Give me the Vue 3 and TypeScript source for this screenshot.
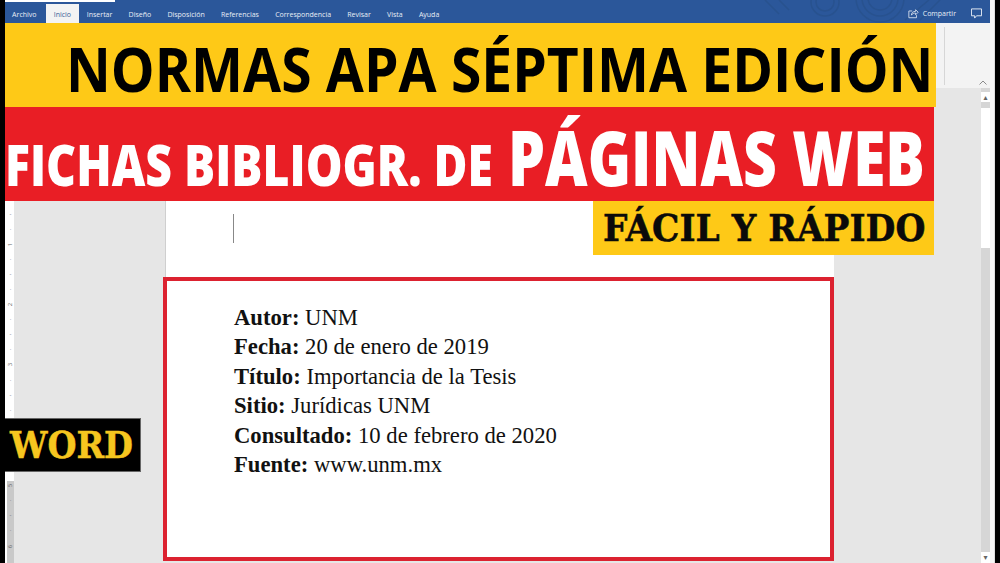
<script setup lang="ts">
const tabs = ['Archivo', 'Inicio', 'Insertar', 'Diseño', 'Disposición', 'Referencias', 'Correspondencia', 'Revisar', 'Vista', 'Ayuda']
const rows = [
  ['Autor:', 'UNM'],
  ['Fecha:', '20 de enero de 2019'],
  ['Título:', 'Importancia de la Tesis'],
  ['Sitio:', 'Jurídicas UNM'],
  ['Consultado:', '10 de febrero de 2020'],
  ['Fuente:', 'www.unm.mx'],
]
const ticks = ['-', '·', '1', '·', '-', '·', '2', '·', '-', '·', '3', '·', '-', '·', '4', '·', '-', '·', '5', '·', '-', '·', '6']
</script>

<template>
  <div class="frame">
    <div class="window">
      <header class="tabbar">
        <div class="quickbar"></div>
        <svg class="pattern" width="200" height="23" viewBox="0 0 200 23" fill="none" stroke="#28528f" stroke-width="1.500">
          <circle cx="70" cy="2" r="9" />
          <circle cx="70" cy="2" r="14" />
          <circle cx="125" cy="-2" r="12" />
          <circle cx="125" cy="-2" r="18" />
          <circle cx="125" cy="-2" r="24" />
          <path d="M10 0l14 14M24 0l10 10M150 20l24-20M165 20l20-20" />
        </svg>
        <nav class="tabs">
          <span v-for="t in tabs" :key="t" class="tab" :class="{ active: t === 'Inicio' }">{{ t }}</span>
        </nav>
        <div class="share">
          <svg width="11" height="11" viewBox="0 0 13 12" fill="none" stroke="#dfe7f3" stroke-width="1">
            <path d="M5 3H1v8h9V8" />
            <path d="M4 8c0-3 2-4.500 5-4.500V1.500L12 4.500 9 7.500V5.500C7 5.500 5 6 4 8z" />
          </svg>
          <span>Compartir</span>
          <svg class="comment" width="11" height="11" viewBox="0 0 12 12" fill="none" stroke="#eef2f8" stroke-width="1">
            <path d="M.5 1h11v7.500H6L4 11V8.500H.5z" />
          </svg>
        </div>
      </header>
      <div class="ribbon">
        <div class="sep"></div>
        <svg class="collapse" width="8" height="5" viewBox="0 0 8 5" fill="none" stroke="#8a8a8a" stroke-width="1">
          <path d="M.5 4.500L4 1l3.500 3.500" />
        </svg>
      </div>
      <div class="workspace">
        <div class="ruler">
          <span v-for="(t, i) in ticks" :key="i" class="tick" :class="{ num: t !== '-' && t !== '·' }">{{ t }}</span>
        </div>
        <main class="canvas">
          <section class="page">
            <div class="caret"></div>
          </section>
          <section class="card">
            <p v-for="r in rows" :key="r[0]"><b>{{ r[0] }}</b> {{ r[1] }}</p>
          </section>
        </main>
        <aside class="scroll">
          <i class="arrow up">▴</i>
          <div class="thumb"></div>
          <div class="track"></div>
          <i class="arrow">▾</i>
        </aside>
      </div>
    </div>
    <div class="banner yellow"><span class="squeeze">NORMAS APA SÉPTIMA EDICIÓN</span></div>
    <div class="banner red"><span class="small">FICHAS BIBLIOGR. DE</span><span class="big">PÁGINAS WEB</span></div>
    <div class="banner quick"><span class="squeeze">FÁCIL Y RÁPIDO</span></div>
    <div class="banner word"><span class="squeeze">WORD</span></div>
  </div>
</template>

<style>
html, body { margin: 0; background: #000; }
</style>

<style scoped>
.frame { position: relative; width: 1000px; height: 563px; overflow: hidden; background: #000; padding: 0 5px; box-sizing: border-box; }
.window { width: 990px; height: 563px; display: flex; flex-direction: column; background: #f6f6f6; border-right: 1px solid #ddd; padding-right: 4px; box-sizing: border-box; }
.tabbar { position: relative; height: 23px; background: #2b579a; display: flex; justify-content: space-between; align-items: flex-end; font: 7px "Open Sans", sans-serif; color: #e8eef6; flex: none; }
.quickbar { position: absolute; left: 0; top: 0; width: 110px; height: 1.500px; background: #fff; }
.pattern { position: absolute; left: 750px; top: 0; }
.tabs { position: relative; display: flex; margin-left: -1px; height: 19.500px; }
.tab { padding: 0 8.100px; line-height: 22px; }
.tab.active { background: #f3f3f3; color: #3a5f98; margin-left: 1px; margin-right: -.500px; }
.share { position: relative; display: flex; align-items: center; gap: 4px; height: 23px; padding: 4px 8px 0 0; box-sizing: border-box; }
.comment { margin-left: 11px; }
.ribbon { height: 65px; background: #f3f3f3; flex: none; display: flex; justify-content: flex-end; padding: 4px 3px 3px 0; box-sizing: border-box; }
.sep { width: 1px; background: #d6d6d6; }
.collapse { align-self: flex-end; margin-left: 34px; margin-bottom: 0; }
.workspace { flex: 1; display: flex; min-height: 0; }
.ruler { width: 9px; flex: none; background: linear-gradient(#fff, #fff) left / 2px 100% no-repeat, linear-gradient(#fff 393px, #c9c9c9 393px); display: flex; flex-direction: column; align-items: flex-end; padding-top: 118.500px; box-sizing: border-box; font: 6px "Open Sans", sans-serif; color: #666; }
.tick { height: 15.100px; line-height: 15.100px; flex: none; width: 7px; text-align: center; }
.tick.num { transform: rotate(-90deg); }
.canvas { flex: 1; background: #e6e6e6; padding-top: 113px; display: flex; flex-direction: column; align-items: flex-start; }
.page { margin-left: 151px; width: 669px; height: 76px; background: #fff; border-left: 1px solid #cfcfcf; padding: 13px 0 0 67px; box-sizing: border-box; }
.caret { width: 1px; height: 29px; background: #888; }
.card { margin-left: 149px; width: 671px; height: 284px; flex: none; box-sizing: border-box; border: 4px solid #dc2230; background: #fff; padding: 22px 0 0 67px; font: 22.660px/29.400px "Liberation Serif", serif; color: #111; }
.card p { margin: 0; white-space: nowrap; }
.scroll { width: 9px; display: flex; flex-direction: column; background: #d6d6d6; flex: none; padding-top: 4px; box-sizing: border-box; }
.arrow { height: 11px; font: 8px/11px "DejaVu Sans", sans-serif; text-align: center; color: #666; flex: none; background: #fff; }
.arrow.up { height: 10px; margin-bottom: 6px; }
.thumb { height: 140px; background: #fff; flex: none; }
.track { flex: 1; }
.banner { position: absolute; box-sizing: border-box; white-space: nowrap; }
.squeeze { display: inline-block; transform-origin: left center; }
.yellow { left: 5px; top: 23px; width: 931px; height: 84px; background: #fec917; color: #000; font: 700 61px/91px "Open Sans", sans-serif; padding-left: 61px; }
.yellow .squeeze { transform: scaleX(.904); }
.red { left: 5px; top: 107px; width: 929px; height: 94px; background: #e91e25; color: #fff; font-family: "Open Sans", sans-serif; font-weight: 800; display: flex; align-items: baseline; padding: 0; line-height: 100px; }
.small { font-size: 57.400px; transform: scaleX(.807); transform-origin: left; width: 503px; flex: none; }
.big { font-size: 77px; transform: scaleX(.762); transform-origin: left; flex: none; }
.quick { left: 593px; top: 201px; width: 341px; height: 54px; background: #fec917; color: #0a0a0a; font: 700 37px/55px "DejaVu Serif", serif; padding-left: 10px; -webkit-text-stroke: .5px #0a0a0a; }
.quick .squeeze { transform: scaleX(.93); }
.word { left: 5px; top: 418px; width: 136px; height: 54px; background: #000; border: 1px solid #666; border-left: 0; color: #f6c61f; font: 700 37px/53px "DejaVu Serif", serif; padding-left: 5px; -webkit-text-stroke: .5px #f6c61f; }
.word .squeeze { transform: scaleX(.9); }
</style>
